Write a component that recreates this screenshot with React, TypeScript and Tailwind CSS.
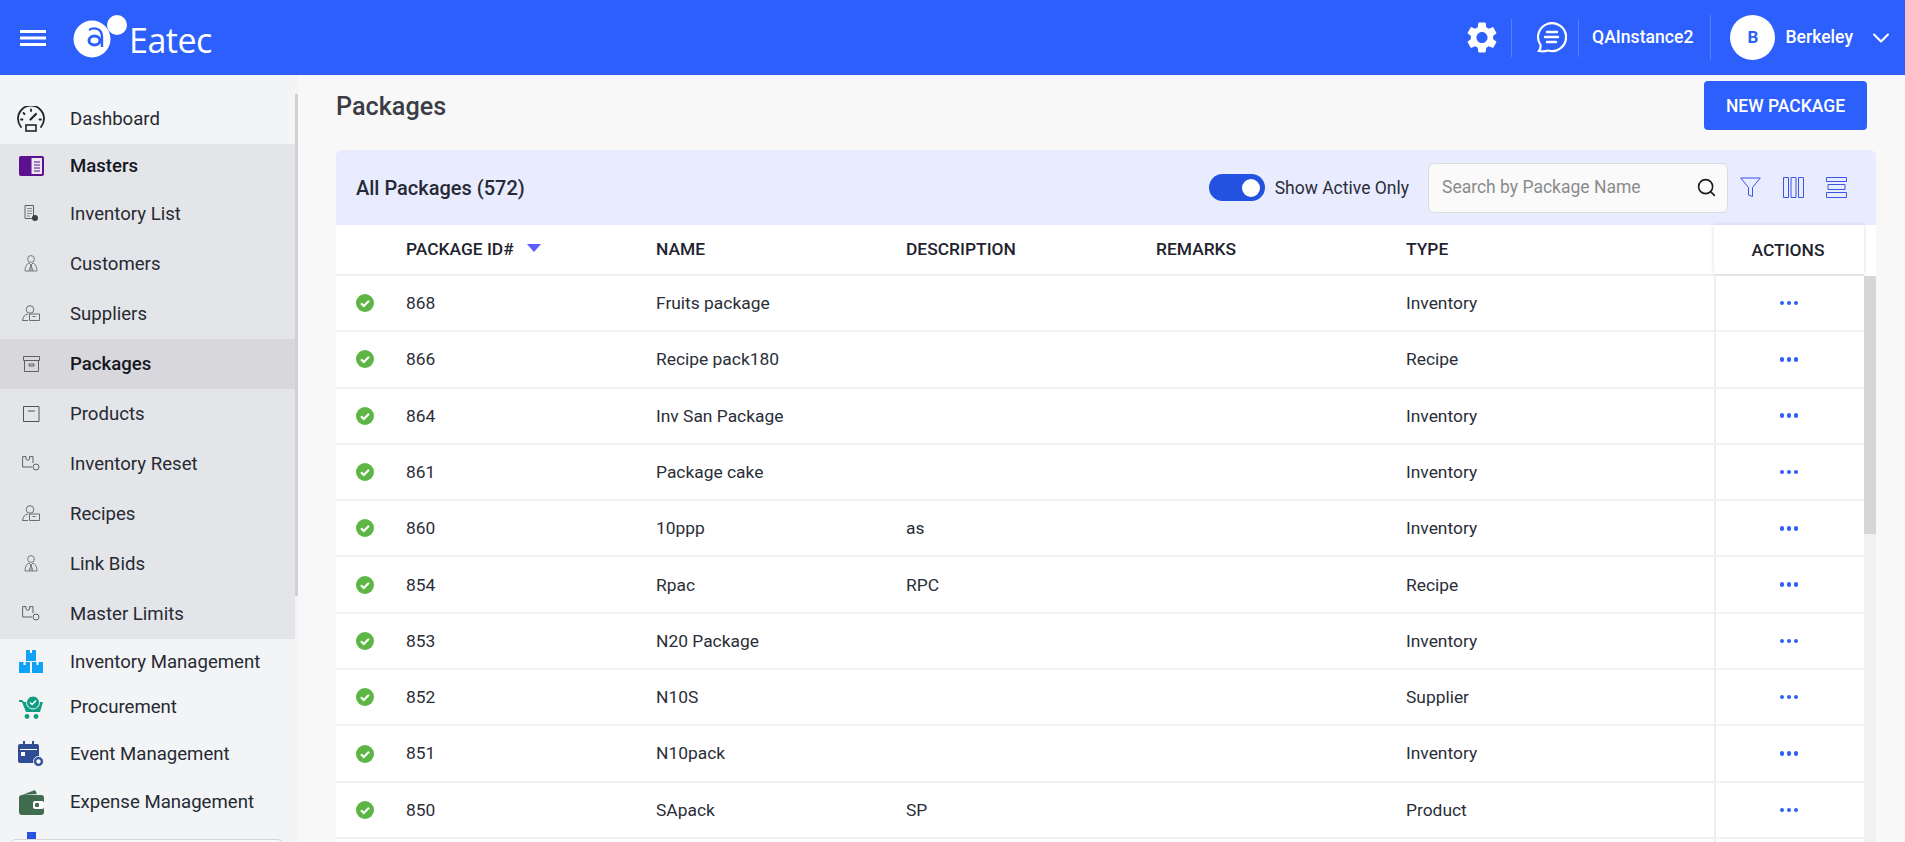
import { ChevronDown, Search } from "lucide-react";
import { ReactNode } from "react";

const rows = [
  { id: "868", name: "Fruits package", desc: "", type: "Inventory" },
  { id: "866", name: "Recipe pack180", desc: "", type: "Recipe" },
  { id: "864", name: "Inv San Package", desc: "", type: "Inventory" },
  { id: "861", name: "Package cake", desc: "", type: "Inventory" },
  { id: "860", name: "10ppp", desc: "as", type: "Inventory" },
  { id: "854", name: "Rpac", desc: "RPC", type: "Recipe" },
  { id: "853", name: "N20 Package", desc: "", type: "Inventory" },
  { id: "852", name: "N10S", desc: "", type: "Supplier" },
  { id: "851", name: "N10pack", desc: "", type: "Inventory" },
  { id: "850", name: "SApack", desc: "SP", type: "Product" },
];

function Logo() {
  return (
    <svg width="60" height="50" viewBox="0 0 60 50" className="shrink-0">
      <circle cx="19" cy="26" r="18.5" fill="#fff" />
      <circle cx="44" cy="12" r="10" fill="#fff" />
      <path d="M16 17c5-3 13-2 13 7v10" fill="none" stroke="#2c5ffb" strokeWidth="2.400" />
      <ellipse cx="21.500" cy="27.500" rx="5.500" ry="4.500" fill="none" stroke="#2c5ffb" strokeWidth="3" />
    </svg>
  );
}

function Gauge() {
  return (
    <svg width="28" height="26" viewBox="0 0 28 26" fill="none" stroke="#1f2430" strokeWidth="1.8">
      <path d="M4 21a13 13 0 1 1 20 0" strokeLinecap="round" />
      <path d="M13.5 13.5 19 8" strokeWidth="2.2" strokeLinecap="round" />
      <rect x="9" y="19" width="10" height="6" strokeWidth="1.6" />
      <path d="M14 3.5v1.5M6.5 7l1 1M4 13.5h1.5M22.5 13.5h1.5" strokeLinecap="round" />
    </svg>
  );
}

function MastersIcon() {
  return (
    <svg width="25" height="20" viewBox="0 0 25 20">
      <rect width="25" height="20" rx="2" fill="#5b1190" />
      <rect x="12.5" y="2" width="10.5" height="16" fill="#ece6f1" />
      <path d="M15 6h6M15 9h6M15 12h6M15 15h6" stroke="#5b1190" strokeWidth="1.2" />
    </svg>
  );
}

function DocIcon() {
  return (
    <svg width="15" height="17" viewBox="0 0 15 17" fill="none" stroke="#5c6068">
      <path d="M1 .5h8.5v13H1z" fill="#e4e5e9" />
      <path d="M3 3.5h5M3 6h5M3 8.500h5M3 11h3" stroke="#85888f" />
      <circle cx="11" cy="13" r="3" fill="#3a3e46" stroke="none" />
    </svg>
  );
}

function TieIcon() {
  return (
    <svg width="14" height="17" viewBox="0 0 14 17" fill="none" stroke="#6d7078" strokeWidth="0.9">
      <circle cx="7" cy="4" r="3.4" />
      <path d="M1 16c0-4 1.500-7 4-8l2 2 2-2c2.500 1 4 4 4 8zM7 10v6M5 16l2-6 2 6" />
    </svg>
  );
}

function SupplierIcon() {
  return (
    <svg width="18" height="17" viewBox="0 0 18 17" fill="none" stroke="#5c6068" strokeWidth="0.9">
      <circle cx="8" cy="4.500" r="3.800" />
      <path d="M.6 15.500c.3-4 2.500-6 5.400-6.500M6 15.500H.6" />
      <path d="M7.500 9h10v6.500h-10zM10.500 11.500h3" />
    </svg>
  );
}

function BoxIcon() {
  return (
    <svg width="17" height="16" viewBox="0 0 17 16" fill="none" stroke="#5c6068" strokeWidth="1">
      <path d="M.5.500h16v4H.5zM1.500 4.500v11h14v-11M6 8h5v2H6z" />
    </svg>
  );
}

function ProductIcon() {
  return (
    <svg width="17" height="16" viewBox="0 0 17 16" fill="none" stroke="#4f535b" strokeWidth="1">
      <path d="M.5.500h15.500v15H.5zM5 5h7" />
    </svg>
  );
}

function ResetIcon() {
  return (
    <svg width="18" height="15" viewBox="0 0 18 15" fill="none" stroke="#5c6068" strokeWidth="1">
      <path d="M10 11H.6V.6h3.400v2.400c0 1.500 3.500 1.500 3.500 0V.6h3.500v6.400" />
      <circle cx="14" cy="11" r="3" />
    </svg>
  );
}

function CubesIcon() {
  return (
    <svg width="24" height="23" viewBox="0 0 24 23" fill="#0fa2f5">
      <path d="M7 0h10v11H7zM0 12h11v11H0zM13 12h11v11H13z" />
      <path d="M11 0h2v3h-2zM4.500 12h2v3h-2zM17.500 12h2v3h-2z" fill="#fff" />
    </svg>
  );
}

function CartIcon() {
  return (
    <svg width="24" height="23" viewBox="0 0 24 23">
      <path d="M0 4h3l2 2h19l-3 10H7L3 6H0z" fill="#0f9d83" />
      <circle cx="14" cy="6.500" r="6.500" fill="#0f9d83" stroke="#f3f4f6" strokeWidth="1" />
      <path d="m11 6.500 2.200 2 3.800-4" fill="none" stroke="#fff" strokeWidth="1.500" />
      <circle cx="8" cy="20.500" r="2.400" fill="#0f9d83" />
      <circle cx="17" cy="20.500" r="2.400" fill="#0f9d83" />
    </svg>
  );
}

function CalendarIcon() {
  return (
    <svg width="26" height="26" viewBox="0 0 26 26">
      <rect y="3" width="21" height="19" rx="2" fill="#2f4d94" />
      <path d="M5 0h2v5H5zM14 0h2v5h-2z" fill="#2f4d94" />
      <path d="M2 8h17v1H2z" fill="#fff" />
      <rect x="3" y="11" width="4" height="4" fill="#fff" />
      <circle cx="20.500" cy="20.500" r="5" fill="#2f4d94" stroke="#f3f4f6" />
      <circle cx="20.500" cy="20.500" r="2.200" fill="#fff" />
    </svg>
  );
}

function WalletIcon() {
  return (
    <svg width="25" height="25" viewBox="0 0 25 25">
      <path d="M3 5 16 0l2 4z" fill="#3f6b4f" />
      <rect y="5" width="25" height="20" rx="3" fill="#3f6b4f" />
      <rect x="14" y="11" width="11" height="8" rx="2" fill="#fff" />
      <rect x="16" y="13" width="4" height="4" rx="1" fill="#3f6b4f" />
    </svg>
  );
}

function Gear() {
  return (
    <svg width="30" height="31" viewBox="2.500 2 19 20" fill="#fff">
      <path d="M19.140 12.940c.04-.3.06-.61.06-.94 0-.32-.02-.64-.07-.94l2.030-1.580c.18-.14.23-.41.12-.61l-1.920-3.320c-.12-.22-.37-.29-.59-.22l-2.390.96c-.5-.38-1.030-.7-1.620-.94l-.36-2.540c-.04-.24-.24-.41-.48-.41h-3.840c-.24 0-.43.17-.47.41l-.36 2.540c-.59.24-1.130.57-1.620.94l-2.390-.96c-.22-.08-.47 0-.59.22L2.740 8.870c-.12.21-.08.47.12.61l2.030 1.580c-.05.3-.09.63-.09.94s.02.64.07.94l-2.030 1.580c-.18.14-.23.41-.12.61l1.920 3.320c.12.22.37.29.59.22l2.390-.96c.5.38 1.030.7 1.620.94l.36 2.540c.05.24.24.41.48.41h3.840c.24 0 .44-.17.47-.41l.36-2.540c.59-.24 1.130-.56 1.620-.94l2.390.96c.22.08.47 0 .59-.22l1.920-3.320c.12-.22.07-.47-.12-.61l-2.010-1.580zM12 15.600c-1.980 0-3.600-1.620-3.600-3.600s1.620-3.600 3.600-3.600 3.600 1.620 3.600 3.600-1.620 3.600-3.600 3.600z" />
    </svg>
  );
}

function Chat() {
  return (
    <svg width="31" height="31" viewBox="0 0 31 31" fill="none" stroke="#fff" strokeWidth="2.200" strokeLinecap="round">
      <path d="M3 29c1.500-2 1.800-4 1.500-6A14 14 0 1 1 12 28.500C9 29.500 6 29.500 3 29z" />
      <path d="M11 10h10M9 15h13M11 20h9" strokeWidth="2.400" />
    </svg>
  );
}

function Check() {
  return (
    <svg width="18" height="18" viewBox="0 0 18 18">
      <circle cx="9" cy="9" r="9" fill="#5cb544" />
      <path d="m5 9.300 2.800 2.700L13 6.800" fill="none" stroke="#fff" strokeWidth="2.200" />
    </svg>
  );
}

function NavItem({ icon, label, active, bold, h = "h-[50px]" }: { icon: ReactNode; label: string; active?: boolean; bold?: boolean; h?: string }) {
  return (
    <div className={`flex ${h} items-center ${active ? "bg-[#d8d8dc]" : ""}`}>
      <div className="flex w-[70px] shrink-0 justify-center pr-[8px]">{icon}</div>
      <span className={`pt-[2px] text-[18.600px] ${bold ? "font-medium text-[#14171f]" : "text-[#262a33]"}`}>{label}</span>
    </div>
  );
}

function Sidebar() {
  return (
    <aside className="relative flex h-full w-[298px] shrink-0 overflow-hidden bg-[#f3f4f6]">
      <div className="w-[295px] shrink-0 pt-[18px]">
        <NavItem icon={<Gauge />} label="Dashboard" h="h-[51px]" />
        <div className="bg-[#e4e5e9]">
          <NavItem icon={<MastersIcon />} label="Masters" bold h="h-[44.500px]" />
          <NavItem icon={<DocIcon />} label="Inventory List" />
          <NavItem icon={<TieIcon />} label="Customers" />
          <NavItem icon={<SupplierIcon />} label="Suppliers" />
          <NavItem icon={<BoxIcon />} label="Packages" active bold />
          <NavItem icon={<ProductIcon />} label="Products" />
          <NavItem icon={<ResetIcon />} label="Inventory Reset" />
          <NavItem icon={<SupplierIcon />} label="Recipes" />
          <NavItem icon={<TieIcon />} label="Link Bids" />
          <NavItem icon={<ResetIcon />} label="Master Limits" />
        </div>
        <NavItem icon={<CubesIcon />} label="Inventory Management" h="h-[46px]" />
        <NavItem icon={<CartIcon />} label="Procurement" h="h-[45px]" />
        <NavItem icon={<CalendarIcon />} label="Event Management" h="h-[48px]" />
        <NavItem icon={<WalletIcon />} label="Expense Management" h="h-[49px]" />
        <div className="ml-[27px] mt-[5px] h-[20px] w-[9px] bg-[#2952e3]" />
      </div>
      <div className="w-[3px]">
        <div className="mt-[19px] h-[502px] bg-[#d0d0d2]" />
      </div>
      <div className="absolute bottom-[-30px] left-[8px] h-[33px] w-[277px] rounded-t-[8px] border border-[#d3d4d8] bg-[#f8f8f9]" />
    </aside>
  );
}

const gridCols = "grid-cols-[70px_250px_250px_250px_250px_1fr_150px]";

function PackageRow({ id, name, desc, type, blank }: { id: string; name: string; desc: string; type: string; blank?: boolean }) {
  return (
    <div className={`grid h-[56.300px] ${gridCols} items-center border-b-2 border-[#f1f2f4] text-[17.400px] text-[#2a2e38]`}>
      <div className="flex pl-[20px]">{!blank && <Check />}</div>
      <div>{id}</div>
      <div>{name}</div>
      <div>{desc}</div>
      <div />
      <div>{type}</div>
      <div className="flex h-full items-center justify-center gap-[2.500px] border-l-2 border-[#eeeef0] bg-white pr-[2px]">
        {!blank && (
          <>
            <span className="h-[4.500px] w-[4.500px] rounded-full bg-[#2c5ffb]" />
            <span className="h-[4.500px] w-[4.500px] rounded-full bg-[#2c5ffb]" />
            <span className="h-[4.500px] w-[4.500px] rounded-full bg-[#2c5ffb]" />
          </>
        )}
      </div>
    </div>
  );
}

export default function App() {
  return (
    <div className="flex h-screen flex-col overflow-hidden bg-[#f8f8f8] font-['Roboto',sans-serif]">
      <header className="flex h-[75px] shrink-0 items-center bg-[#2c5ffb] text-white">
        <svg width="26" height="16" viewBox="0 0 26 16" fill="#fff" className="ml-[20px]">
          <path d="M0 0h26v3H0zM0 6.500h26v3H0zM0 13h26v3H0z" />
        </svg>
        <div className="ml-[27px] flex items-center">
          <Logo />
          <span className="-ml-[4px] mt-[4px] font-['Open_Sans',sans-serif] text-[34px] font-normal leading-none tracking-[-0.5px]">Eatec</span>
        </div>
        <div className="ml-auto flex items-center">
          <Gear />
          <div className="ml-[14px] h-[38px] w-px bg-white/20" />
          <div className="ml-[24px] flex"><Chat /></div>
          <div className="ml-[11px] h-[38px] w-px bg-white/20" />
          <span className="ml-[13px] text-[17.600px] font-medium">QAInstance2</span>
          <div className="ml-[17px] h-[45px] w-px bg-white/20" />
          <div className="ml-[19px] flex h-[45px] w-[45px] items-center justify-center rounded-full bg-white text-[17px] font-bold text-[#2c5ffb]">B</div>
          <span className="ml-[10px] text-[17.600px] font-medium">Berkeley</span>
          <ChevronDown size={28} strokeWidth={1.800} className="ml-[14px] mr-[10px]" />
        </div>
      </header>

      <div className="flex min-h-0 flex-1">
        <Sidebar />
        <main className="flex min-w-0 flex-1 flex-col pl-[38px] pr-[29px]">
          <div className="flex h-[75px] shrink-0 items-start justify-between pr-[9px] pt-[6px]">
            <h1 className="mt-[11px] text-[25.200px] font-medium leading-[30px] text-[#3a3d45]">Packages</h1>
            <button className="h-[49px] w-[163px] rounded-[4px] bg-[#2c5ffb] pt-[2px] text-[17.500px] font-medium text-white">NEW PACKAGE</button>
          </div>

          <section className="flex min-h-0 flex-1 flex-col">
            <div className="flex h-[75px] shrink-0 items-center rounded-t-[6px] bg-[#e9ebff] pl-[20px] pr-[29px]">
              <span className="text-[20px] font-medium text-[#252a36]">All Packages (572)</span>
              <div className="ml-auto flex h-[27px] w-[56px] items-center justify-end rounded-full bg-[#2452e0] pr-[5px]">
                <span className="h-[18px] w-[18px] rounded-full bg-white" />
              </div>
              <span className="ml-[10px] pt-[2px] text-[17.500px] text-[#2a2e38]">Show Active Only</span>
              <div className="ml-[19px] flex h-[50px] w-[300px] items-center rounded-[6px] border border-[#dcdcdc] bg-[#fafafa] pl-[13px] pr-[10px]">
                <input
                  placeholder="Search by Package Name"
                  className="min-w-0 flex-1 bg-transparent text-[17.500px] outline-none placeholder:text-[#8b8b8b]"
                />
                <Search size={21} strokeWidth={1.800} className="text-[#1b1b1b]" />
              </div>
              <svg width="21" height="21" viewBox="0 0 21 21" fill="none" stroke="#3a55e8" className="ml-[12px]">
                <path d="M.7 1h19.600l-7.800 9.500v9l-4-1.500v-7.500z" />
              </svg>
              <svg width="21" height="21" viewBox="0 0 21 21" fill="none" stroke="#3a55e8" className="ml-[22px]">
                <path d="M.5.500h5v20h-5zM8 .500h5v20H8zM15.500.500h5v20h-5z" />
              </svg>
              <svg width="21" height="21" viewBox="0 0 21 21" fill="none" stroke="#3a55e8" className="ml-[22px]">
                <path d="M.5.500h20v4H.5zM2 7.500h17v5H2zM.5 15.500h20v5H.5z" />
              </svg>
            </div>

            <div className="flex min-h-0 flex-1 flex-col bg-white">
              <div className={`grid h-[51px] shrink-0 ${gridCols} mr-[12px] items-center border-b-2 border-[#eeeff2] text-[17.400px] font-medium text-[#1f2330]`}>
                <div />
                <div className="flex items-center gap-[13px]">
                  PACKAGE ID#
                  <svg width="14" height="8" viewBox="0 0 14 8" className="mb-[2px]">
                    <path d="M0 0h14L7 8z" fill="#5c5cff" />
                  </svg>
                </div>
                <div>NAME</div>
                <div>DESCRIPTION</div>
                <div>REMARKS</div>
                <div>TYPE</div>
                <div className="flex h-full items-center justify-center bg-white pr-[2px] pt-[1px] shadow-[0_0_4px_rgba(0,0,0,0.15)]">ACTIONS</div>
              </div>
              <div className="flex min-h-0 flex-1">
                <div className="min-w-0 flex-1 overflow-hidden">
                  {rows.map((r) => (
                    <PackageRow key={r.id} {...r} />
                  ))}
                  <PackageRow id="" name="" desc="" type="" blank />
                </div>
                <div className="w-[12px] shrink-0 bg-[#f1f1f1]">
                  <div className="h-[258px] bg-[#d6d6d6]" />
                </div>
              </div>
            </div>
          </section>
        </main>
      </div>
    </div>
  );
}
